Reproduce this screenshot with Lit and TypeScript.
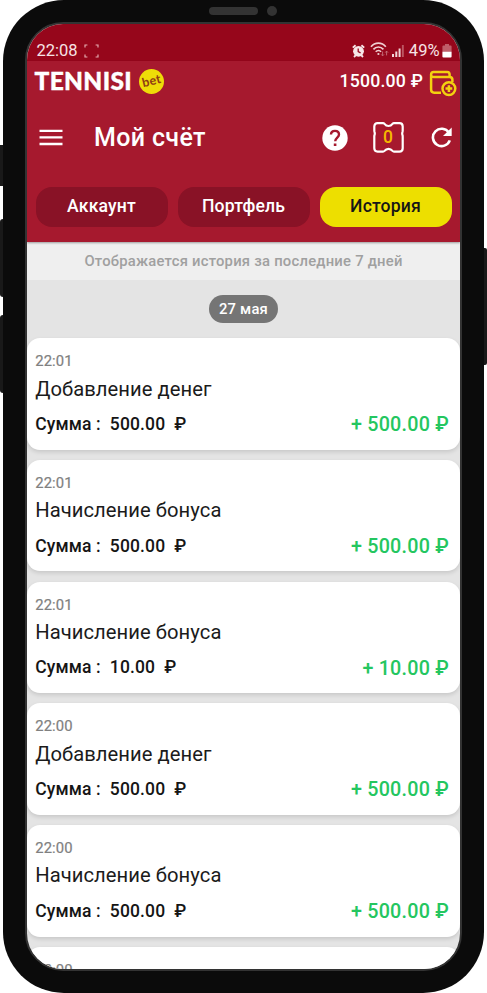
import { LitElement, html, svg, css, nothing } from "lit";
import { customElement, property } from "lit/decorators.js";

interface Entry {
  time: string;
  title?: string;
  amount?: string;
}

const ENTRIES: Entry[] = [
  { time: "22:01", title: "Добавление денег", amount: "500.00" },
  { time: "22:01", title: "Начисление бонуса", amount: "500.00" },
  { time: "22:01", title: "Начисление бонуса", amount: "10.00" },
  { time: "22:00", title: "Добавление денег", amount: "500.00" },
  { time: "22:00", title: "Начисление бонуса", amount: "500.00" },
  { time: "22:00" },
];

@customElement("history-card")
class HistoryCard extends LitElement {
  @property({ attribute: false }) entry!: Entry;

  static styles = css`
    :host {
      display: block;
      box-sizing: border-box;
      height: 111.5px;
      flex: none;
      padding: 12.9px 11px 0 8.2px;
      background: #fff;
      border-radius: 13px;
      box-shadow: 0 2px 4px rgba(0, 0, 0, 0.13);
    }
    .time {
      font-size: 14.8px;
      line-height: 20px;
      letter-spacing: 0.15px;
      color: #808080;
      -webkit-text-stroke: 0.2px #808080;
    }
    .title {
      margin-top: 5.5px;
      font-size: 20.2px;
      line-height: 24px;
      letter-spacing: 0.06px;
      color: #1b1b1b;
    }
    .line {
      display: flex;
      justify-content: space-between;
      margin-top: 11.2px;
      line-height: 24px;
      font-weight: 500;
      white-space: pre;
    }
    .sum {
      font-size: 17.5px;
      letter-spacing: 0.14px;
      color: #151515;
    }
    .gain {
      margin-top: 1.3px;
      font-size: 19.7px;
      letter-spacing: 0.24px;
      color: #24c660;
    }
  `;

  render() {
    const { time, title, amount } = this.entry;
    return html`
      <div class="time">${time}</div>
      ${title
        ? html`<div class="title">${title}</div>
            <div class="line"><span class="sum">${`Сумма :  ${amount}  ₽`}</span><span class="gain">${`+ ${amount} ₽`}</span></div>`
        : nothing}
    `;
  }
}

const captureIcon = svg`<svg class="capture" width="15" height="14" viewBox="0 0 15 14" fill="none" stroke="#e3a9ae" stroke-width="1.2">
  <path d="M1 3.4V1H3.4M11.600 1H14V3.4M14 10.6V13h-2.4M3.4 13H1v-2.4"/></svg>`;

const alarmIcon = svg`<svg width="13" height="14" viewBox="0 0 13 14">
  <path d="M.8 3.6 3.6 1.2M12.2 3.6 9.4 1.2M2 13l1.8-1.8M11 13l-1.8-1.8" stroke="#f7e6e7" stroke-width="1.9" fill="none"/>
  <circle cx="6.5" cy="7.3" r="5.4" fill="#f7e6e7"/>
  <path d="M6.2 4.5v3.2l2.4 1.2" stroke="#96061b" stroke-width="1.3" fill="none"/></svg>`;

const wifiIcon = svg`<svg width="19" height="15" viewBox="0 0 19 15" fill="none" stroke="#f0cfd2">
  <path d="M1 4.7C5-.1 11.8-.1 15.8 4.7" stroke-width="1.7"/>
  <path d="M3.4 7.4c2.8-3.2 7.2-3.2 10 0" stroke-width="1.7"/>
  <path d="M5.7 9.8c1.6-1.7 3.9-1.7 5.4 0" stroke-width="1.6"/>
  <circle cx="8.4" cy="12" r="1.1" fill="#f0cfd2" stroke="none"/>
  <path d="M12.6 9.5v4.2M11.2 12.4l1.4 1.5 1.4-1.5M16.6 13.4V9.2M15.2 10.6l1.4-1.5 1.4 1.5" stroke="#c7737d" stroke-width=".9"/></svg>`;

const signalIcon = svg`<svg width="12" height="12" viewBox="0 0 12 12">
  <path d="M0 9h2v3H0zM3.3 6.5h2V12h-2zM6.6 3.5h2V12h-2z" fill="#f2d5d7"/>
  <path d="M9.9 0h1.9v12H9.9z" fill="#bc5662"/></svg>`;

const batteryIcon = svg`<svg width="10" height="14" viewBox="0 0 10 14">
  <path d="M3 0h4v1.6h1.6q1 0 1 1V7H.4V2.6q0-1 1-1H3z" fill="#bf5d68"/>
  <path d="M.4 7.4h9.2v5.2q0 1-1 1H1.4q-1 0-1-1z" fill="#fff"/></svg>`;

const walletIcon = svg`<svg class="wallet" width="28" height="27" viewBox="0 0 28 27" fill="none" stroke="#f3d110" stroke-width="2.5">
  <path d="M12 22.7H5.2Q2.1 22.7 2.1 19.6V4.5Q2.1 1.9 4.7 1.9H18.2Q20.6 1.9 20.6 4.6V7M2.3 5.8Q3 7 4.7 7H20.6Q23.4 7 23.4 9.8V12"/>
  <circle cx="19.9" cy="18.6" r="6.4"/>
  <path d="M19.9 15.2v6.800M16.500 18.6h6.800"/></svg>`;

const menuIcon = svg`<svg class="menu" width="24" height="17" viewBox="0 0 24 17">
  <path d="M.5 1.8h23M.5 8.4h23M.5 15h23" stroke="#fff" stroke-width="2.3"/></svg>`;

const helpIcon = svg`<svg width="26" height="26" viewBox="0 0 26 26">
  <circle cx="13" cy="13" r="12.7" fill="#fff"/>
  <path d="M9 9.6C9 7.2 10.8 5.9 13 5.9s4 1.3 4 3.7c0 2.9-3.8 3.1-3.8 6.7" fill="none" stroke="#a6192e" stroke-width="2.4"/>
  <path d="M11.8 18.4h2.6v2.6h-2.6z" fill="#a6192e"/></svg>`;

const refreshIcon = svg`<svg width="22" height="21" viewBox="0 0 22 21">
  <path d="M17.9 5.6A8.7 8.7 0 1 0 18.8 13.4" fill="none" stroke="#fff" stroke-width="2.6"/>
  <path d="M20.7.5V9H12z" fill="#fff"/></svg>`;

const ticketIcon = svg`<svg class="outline" width="31" height="31" viewBox="0 0 31 31">
  <path d="M4.6 1.2H10q.9 0 1.5.7 1.6 2.1 4 2.1t4-2.1q.6-.7 1.5-.7h5.4q3.3 0 3.3 3.3v3.8q0 .8-.2 1.5-.3.8-.3 1.7t.3 1.7q.2.6.2 1.5v11.6q0 3.3-3.3 3.3H21q-.9 0-1.5-.7-1.6-2.1-4-2.1t-4 2.1q-.6.7-1.5.7H4.6q-3.3 0-3.3-3.3V14.700q0-.9.2-1.5.3-.8.3-1.7t-.3-1.7q-.2-.7-.2-1.5V4.5q0-3.3 3.3-3.3z" fill="none" stroke="#fff" stroke-width="2.2"/></svg>`;

@customElement("app-root")
class AppRoot extends LitElement {
  static styles = css`
    :host {
      display: block;
      position: relative;
      height: 993px;
      overflow: hidden;
      background: #fff;
      font-family: Roboto, "Liberation Sans", sans-serif;
    }
    .key {
      position: absolute;
      width: 6px;
      background: #191919;
    }
    .key.left {
      left: 0;
    }
    .key.right {
      right: 0;
    }
    .k1 {
      top: 145px;
      height: 41px;
    }
    .k2 {
      top: 219px;
      height: 78px;
      border-radius: 4px;
    }
    .k3 {
      top: 315px;
      height: 78px;
      border-radius: 4px;
    }
    .k4 {
      top: 248px;
      height: 117px;
      border-radius: 2px;
    }
    .phone {
      position: relative;
      box-sizing: border-box;
      height: 993px;
      margin: 0 3px;
      padding: 22px 22px;
      border-radius: 61px;
      background: #0b0b0b;
    }
    .speaker {
      position: absolute;
      left: 206px;
      top: 7px;
      width: 49px;
      height: 8px;
      border-radius: 4px;
      background: #333;
    }
    .camera {
      position: absolute;
      left: 264px;
      top: 6px;
      width: 10px;
      height: 10px;
      border-radius: 50%;
      background: #333;
    }
    .screen {
      box-sizing: border-box;
      height: 949px;
      border: 2px solid #333;
      border-radius: 38px;
      overflow: hidden;
      background: #e4e4e4;
      display: flex;
      flex-direction: column;
    }
    .status {
      flex: none;
      box-sizing: border-box;
      height: 37px;
      padding: 16px 8.5px 0 9.5px;
      display: flex;
      align-items: center;
      background: #96061b;
      color: #f7e3e5;
      font-size: 16.5px;
      line-height: 20px;
    }
    .capture {
      margin-left: 6px;
    }
    .icons {
      margin-left: auto;
      display: flex;
      align-items: center;
      gap: 5px;
    }
    .wifi {
      display: flex;
      margin: -2px -2px 0 0;
    }
    .icons .batt {
      margin-left: -3px;
      display: flex;
    }
    .header {
      flex: none;
      box-sizing: border-box;
      height: 181px;
      background: #a6192e;
      color: #fff;
      position: relative;
      box-shadow: 0 1px 2px rgba(0, 0, 0, 0.35);
    }
    .brand {
      height: 40px;
      padding: 0 3px 0 7.5px;
      display: flex;
      align-items: center;
    }
    .logo {
      font-family: Lato, sans-serif;
      font-weight: 900;
      font-size: 24.5px;
      line-height: 24px;
      letter-spacing: 0.35px;
      -webkit-text-stroke: 0.4px #fff;
    }
    .bet {
      width: 25px;
      height: 25px;
      margin-left: 7px;
      border-radius: 50%;
      background: #eedc08;
      color: #8f3a14;
      font: 700 12.5px/23px Lato, sans-serif;
      letter-spacing: 0.3px;
      text-align: center;
    }
    .bet span {
      display: block;
      transform: rotate(-14deg);
    }
    .balance {
      margin-left: auto;
      font-size: 17.7px;
      font-weight: 500;
      letter-spacing: 0.2px;
    }
    .wallet {
      margin: 4px 0 0 6px;
    }
    .bar {
      height: 73px;
      padding: 0 7.5px 0 12px;
      display: flex;
      align-items: center;
    }
    .bar h1 {
      margin: 0 auto 0 31px;
      font-size: 25px;
      font-weight: 500;
      line-height: 30px;
      letter-spacing: 0.35px;
    }
    .ticket {
      width: 31px;
      height: 31px;
      margin: -1px 27px 0 25px;
      display: grid;
      place-items: center;
    }
    .ticket > * {
      grid-area: 1 / 1;
    }
    .ticket span {
      margin-bottom: 1px;
      font-size: 17.5px;
      line-height: 20px;
      font-weight: 500;
      color: #f5b800;
    }
    .tabs {
      display: grid;
      grid-template-columns: repeat(3, 132px);
      gap: 10px;
      padding: 12.5px 0 0 8.5px;
    }
    .tab {
      height: 40.5px;
      border-radius: 16px;
      background: #891226;
      text-align: center;
      font-size: 17.6px;
      font-weight: 500;
      line-height: 39px;
      letter-spacing: 0.15px;
    }
    .tab.active {
      background: #eddf00;
      color: #161616;
    }
    .notice {
      flex: none;
      height: 38px;
      background: #efefef;
      color: #a0a0a0;
      text-align: center;
      font-size: 14.8px;
      font-weight: 500;
      line-height: 38px;
      letter-spacing: 0.24px;
    }
    .chip {
      flex: none;
      align-self: center;
      width: 69px;
      height: 28px;
      margin: 15px 0 15.3px;
      border-radius: 14px;
      background: #757575;
      color: #fff;
      text-align: center;
      font-size: 14.8px;
      font-weight: 500;
      line-height: 28px;
      letter-spacing: 0.2px;
    }
    .list {
      display: flex;
      flex-direction: column;
      gap: 10.2px;
    }
  `;

  render() {
    return html`
      <div class="key left k1"></div>
      <div class="key left k2"></div>
      <div class="key left k3"></div>
      <div class="key right k4"></div>
      <div class="phone">
        <div class="speaker"></div>
        <div class="camera"></div>
        <div class="screen">
          <div class="status">
            <span>22:08</span>${captureIcon}
            <div class="icons">
              ${alarmIcon}<span class="wifi">${wifiIcon}</span>${signalIcon}<span class="pct">49%</span><span class="batt">${batteryIcon}</span>
            </div>
          </div>
          <div class="header">
            <div class="brand">
              <span class="logo">TENNISI</span>
              <div class="bet"><span>bet</span></div>
              <span class="balance">1500.00 ₽</span>${walletIcon}
            </div>
            <div class="bar">
              ${menuIcon}
              <h1>Мой счёт</h1>
              ${helpIcon}
              <div class="ticket">${ticketIcon}<span>0</span></div>
              ${refreshIcon}
            </div>
            <div class="tabs">
              <div class="tab">Аккаунт</div>
              <div class="tab">Портфель</div>
              <div class="tab active">История</div>
            </div>
          </div>
          <div class="notice">Отображается история за последние 7 дней</div>
          <div class="chip">27 мая</div>
          <div class="list">
            ${ENTRIES.map((e) => html`<history-card .entry=${e}></history-card>`)}
          </div>
        </div>
      </div>
    `;
  }
}
